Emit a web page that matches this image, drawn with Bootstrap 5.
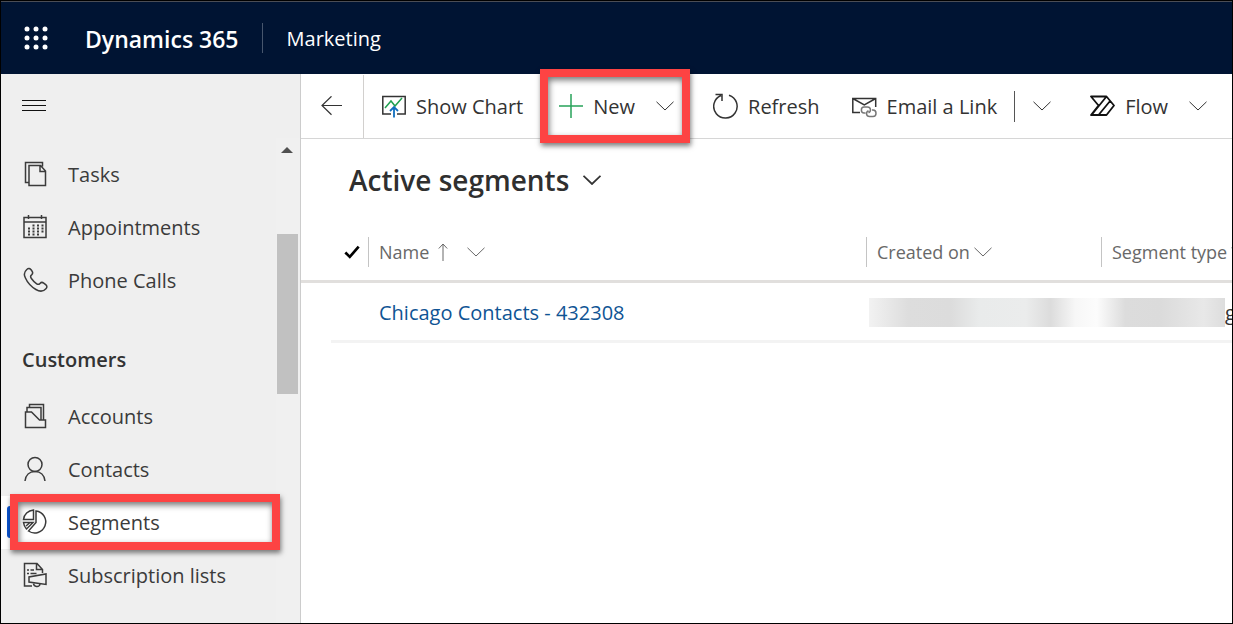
<!DOCTYPE html>
<html lang="en">
<head>
<meta charset="utf-8">
<meta name="viewport" content="width=device-width, initial-scale=1">
<title>Active segments - Dynamics 365 Marketing</title>
<link href="https://cdn.jsdelivr.net/npm/bootstrap@5.3.0/dist/css/bootstrap.min.css" rel="stylesheet">
<style>
  body { font-family: "Open Sans", "Noto Sans", sans-serif; font-size: 20px; line-height: 28px; color: #333; background: #fff; }
  svg { display: block; flex: none; fill: none; stroke: currentColor; stroke-width: 1.5; }
  svg.thin { stroke-width: 1; }
  svg.plus-icon { stroke: #27a35a; }
  svg.launcher-icon { fill: #fff; stroke: none; }
  svg.flow-icon { stroke: #111; stroke-width: 1.8; stroke-linejoin: round; }
  svg.check-icon { stroke: #000; stroke-width: 3; }
  svg.title-chevron { stroke-width: 1.8; }
  button { color: inherit; background: none; border: 0; padding: 0; }
  .app-frame { border: 1px solid #000; }
  .top-bar { height: 73px; background: #001433; border-top: 1px solid #4a4d55; padding: 0 20px 0 22px; color: #fff; }
  .brand-name { font-weight: 600; font-size: 23px; margin-left: 36px; padding-top: 2px; }
  .app-name { border-left: 1px solid #47566d; margin-left: 23px; padding-left: 24px; color: #fff; padding-top: 2px; }
  .side-nav { width: 300px; background: #efefef; border-right: 1px solid #ccc; }
  .menu-toggle { height: 64px; padding-left: 21px; color: #111; }
  .nav-items { padding-top: 10px; }
  .nav-row { height: 53px; padding: 0 0 1px 21px; color: #3b3b3b; text-decoration: none; position: relative; }
  .nav-row svg { margin-right: 20px; }
  .nav-row span { padding-top: 2px; }
  .nav-row.active { background: #fff; }
  .nav-row.active::before { content: ""; position: absolute; left: 6px; top: 10px; width: 8px; height: 32px; border-radius: 3px; background: #0b53ce; }
  .nav-heading { font-size: 20px; font-weight: 600; line-height: 28px; margin: 0; padding: 39px 0 16px 21px; }
  .scroll-track { width: 24px; background: #f0f0f0; padding: 9px 2px 0 0; }
  .scroll-arrow { border: 6px solid transparent; border-top: 0; border-bottom-color: #505050; }
  .scroll-thumb { width: 21px; height: 160px; background: #c1c1c1; margin-top: 81px; }
  .command-bar { height: 65px; border-bottom: 1px solid #d6d6d6; }
  .command-bar button { display: flex; align-items: center; gap: 10px; white-space: nowrap; }
  .command-bar button span { padding-top: 1px; }
  .back-button { width: 63px; height: 63px; border-right: 1px solid #d2d0ce !important; justify-content: center; margin-right: 18px; }
  .new-group { margin-left: 36px; }
  .gap-wide { margin-left: 39px; }
  .gap-mid { margin-left: 32px; }
  .gap-tight { margin-left: 21px; }
  .gap-title { margin-left: 14px; }
  .split-rule { width: 1px; height: 31px; background: #555; margin: 0 18px 0 17px; }
  .callout-box { position: absolute; border: 8px solid #fd4343; box-shadow: 1px 3px 5px rgba(0,0,0,.5), inset 1px 3px 6px rgba(0,0,0,.55); pointer-events: none; }
  .callout-new { inset: -23px -16px -22px -19px; }
  .callout-segments { inset: -2px -4px -1px 9px; z-index: 2; }
  .view-title { font-size: 28px; line-height: 36px; font-weight: 600; color: #2f2f2f; margin: 0; }
  .view-picker { padding: 23px 0 0 48px; }
  .segment-grid { table-layout: fixed; margin: 26px 0 0; width: 100%; border-collapse: separate; border-spacing: 0; }
  .segment-grid th, .segment-grid td { padding: 0; font-weight: 400; white-space: nowrap; overflow: hidden; }
  .segment-grid th { height: 59px; border-bottom: 3px solid #e1dfdd; color: #686868; font-size: 18px; vertical-align: middle; }
  .segment-grid td { height: 60px; border-bottom: 3px solid #f3f3f3; padding-top: 2px; }
  .segment-grid td.gutter { border-bottom: 0; }
  .head-cell { height: 30px; border-left: 1px solid #c4c4c4; padding-left: 10px; display: flex; align-items: center; }
  .sort-arrow { margin: 0 19px 0 9px; }
  .w-gutter { width: 30px; } .w-check { width: 37px; } .w-created { width: 235px; } .w-type { width: 131px; }
  .segment-link { color: #0f5494; text-decoration: none; padding-left: 11px; }
  .redacted { flex: 1; height: 29px; margin-left: 3px; background: linear-gradient(90deg, #f2f2f2 0, #ddd 11%, #dcdcdc 23%, #e9ebeb 31%, #ebecec 44%, #dcdcdc 51%, #f7f7f7 58%, #fcfcfc 64%, #dcdcdc 72%, #dbdbdb 82%, #e8e8e8 94%, #ddd 100%); }
  .cut-text { width: 7px; overflow: hidden; }
</style>
</head>
<body>
<svg class="d-none">
  <symbol id="chevron" viewBox="0 0 18 10"><path d="M.5.8 9 9 17.5.8"/></symbol>
</svg>
<div class="app-frame d-flex flex-column min-vh-100 overflow-hidden">
  <header class="top-bar d-flex align-items-center">
    <button type="button" aria-label="App launcher">
      <svg class="launcher-icon" width="26" height="26" viewBox="0 0 26 26"><circle cx="4" cy="4" r="2.5"/><circle cx="13" cy="4" r="2.5"/><circle cx="22" cy="4" r="2.5"/><circle cx="4" cy="13" r="2.5"/><circle cx="13" cy="13" r="2.5"/><circle cx="22" cy="13" r="2.5"/><circle cx="4" cy="22" r="2.5"/><circle cx="13" cy="22" r="2.5"/><circle cx="22" cy="22" r="2.5"/></svg>
    </button>
    <span class="brand-name">Dynamics 365</span>
    <span class="app-name">Marketing</span>
  </header>
  <div class="d-flex flex-grow-1">
    <aside class="side-nav flex-shrink-0 d-flex flex-column">
      <button type="button" class="menu-toggle d-flex align-items-center" aria-label="Toggle navigation"><svg class="thin" width="24" height="12" viewBox="0 0 24 12"><path d="M0 .5h24M0 5.500h24M0 10.500h24"/></svg></button>
      <div class="d-flex flex-grow-1">
        <nav class="nav-items flex-grow-1">
          <a href="#" class="nav-row d-flex align-items-center"><svg width="26" height="26" viewBox="0 0 26 26"><path d="M7 21.500H3.500V1.500h17v4M7 4.500h11.500l5 5.500v14.500H7zM18 4.500v6h5.500"/></svg><span>Tasks</span></a>
          <a href="#" class="nav-row d-flex align-items-center"><svg width="26" height="26" viewBox="0 0 26 26"><path d="M2 3.500h22v20H2zM2 8h22M6.500 1v4M19.500 1v4"/><path stroke-dasharray="2 2.500" stroke-width="1.800" d="M10.500 11.500h11M6 14.500h15.500M6 17.500h15.500M6 20.500h11"/></svg><span>Appointments</span></a>
          <a href="#" class="nav-row d-flex align-items-center"><svg width="26" height="26" viewBox="0 0 26 26"><path d="M5 2.200C6.500.8 8 1.500 9.300 3l1 1.600c.7 1.400.4 2.300-.7 3.200-1.300 1-1.400 2-.2 3.700 1.600 2.300 3.400 4.100 5.300 5.300 1.500 1 2.300.7 3.300-.4 1.200-1.300 2.400-1.300 3.700-.3l2 1.600c1.600 1.300 1.500 2.600.2 4-2.500 2.800-6 3.200-10 .8-4.700-2.900-8.700-7.500-10.600-11.800C1.500 7.300 2.300 4.600 5 2.200z"/></svg><span>Phone Calls</span></a>
          <h2 class="nav-heading">Customers</h2>
          <a href="#" class="nav-row d-flex align-items-center"><svg width="26" height="26" viewBox="0 0 26 26"><path d="M5 9V4.500h14v12M7.500 4.500v-3h14v15M3.500 9h6l8 8h6v7.500h-20z"/></svg><span>Accounts</span></a>
          <a href="#" class="nav-row d-flex align-items-center"><svg width="26" height="26" viewBox="0 0 26 26"><circle cx="13" cy="8.500" r="7"/><path d="M3 25c.6-6 4.500-9.500 10-9.500S22.400 19 23 25"/></svg><span>Contacts</span></a>
          <a href="#" class="nav-row active d-flex align-items-center" aria-current="page"><svg width="26" height="26" viewBox="0 0 26 26"><path d="M11.500 1v9.500H1.500C2 5.500 6 1.500 11.500 1zM14 2a11 11 0 1 1-7.500 20L14 13.500zM1.500 13.500H11L4.500 20C2.700 18 1.800 16 1.500 13.500zM4 17l4-3.500"/></svg><span>Segments</span><i class="callout-box callout-segments"></i></a>
          <a href="#" class="nav-row d-flex align-items-center"><svg width="26" height="26" viewBox="0 0 26 26"><path d="M10 24H2.500V1.500H15l5.500 6V11M14.500 1.500v6h6M5 8h2M8.500 8h3.500M5 11.500h2M8.500 11.500h6M7 15v5l17 2.500V12L7 15zM11.500 21c0 4.500 6 4.500 6.500 1"/></svg><span>Subscription lists</span></a>
        </nav>
        <div class="scroll-track d-flex flex-column align-items-center" aria-hidden="true"><span class="scroll-arrow"></span><span class="scroll-thumb"></span></div>
      </div>
    </aside>
    <main class="flex-fill w-100">
      <div class="command-bar d-flex align-items-center">
        <button type="button" class="back-button" aria-label="Back"><svg class="thin" width="22" height="20" viewBox="0 0 22 20"><path stroke-width="1.200" d="M1 9.500h20M10.500.3 1 9.500l9.500 9.200"/></svg></button>
        <button type="button"><svg width="24" height="24" viewBox="0 0 24 24"><path d="M9 20H.8V2.500h22.400V20H15"/><path stroke="#1fa050" d="m3 14 6-7 4 5 7-8"/><path stroke="#106ebe" stroke-width="1.800" d="M12 23.500v-10M8 17l4-4 4 4"/></svg><span>Show Chart</span></button>
        <div class="new-group position-relative d-flex align-items-center">
          <button type="button"><svg class="plus-icon" width="24" height="24" viewBox="0 0 24 24"><path d="M12 0v24M0 12h24"/></svg><span>New</span></button>
          <button type="button" class="gap-tight" aria-label="More new options"><svg class="thin" width="18" height="10"><use href="#chevron"/></svg></button>
          <i class="callout-box callout-new"></i>
        </div>
        <button type="button" class="gap-wide"><svg width="25" height="26" viewBox="0 0 25 26"><path d="M16 2.200A11.700 11.700 0 1 1 8 2.500M2.500 1.500H9V8"/></svg><span>Refresh</span></button>
        <button type="button" class="gap-mid"><svg width="25" height="24" viewBox="0 0 25 24"><path d="M8 18.500H.8V4.500h22.900V13M.8 4.500l11.500 6.500 11.400-6.500"/><path stroke="#777" d="M13.500 19H12c-3.500 0-3.500-6 0-6h3.500c3.500 0 4 4.500 1 5.800M20 16h1c4 0 4 6.500 0 6.500h-3.500c-3.500 0-4-4.500-1-5.800"/></svg><span>Email a Link</span></button>
        <span class="split-rule"></span>
        <button type="button" aria-label="More link options"><svg class="thin" width="18" height="10"><use href="#chevron"/></svg></button>
        <button type="button" class="gap-wide"><svg class="flow-icon" width="25" height="22" viewBox="0 0 25 22"><path d="M1 1.500h15.500l7.500 9-7.500 9.500H1l7.500-9.500zM16.500 1.500 1.500 20M20.500 5.500 8.500 20"/></svg><span>Flow</span></button>
        <button type="button" class="gap-tight" aria-label="Flow options"><svg class="thin" width="18" height="10"><use href="#chevron"/></svg></button>
      </div>
      <div class="view-picker d-flex align-items-center">
        <h1 class="view-title">Active segments</h1>
        <button type="button" class="gap-title" aria-label="Change view"><svg class="title-chevron" width="18" height="10"><use href="#chevron"/></svg></button>
      </div>
      <table class="segment-grid">
        <colgroup><col class="w-gutter"><col class="w-check"><col><col class="w-created"><col class="w-type"></colgroup>
        <thead>
          <tr>
            <th></th>
            <th scope="col" aria-label="Select"><svg class="check-icon ms-auto me-2" width="16" height="14" viewBox="0 0 18 15"><path d="m1.500 8 5 5L16.500 1.500"/></svg></th>
            <th scope="col"><div class="head-cell">Name<svg class="thin sort-arrow" width="10" height="18" viewBox="0 0 10 18"><path d="M5 18V1M.8 5.500 5 1l4.200 4.500"/></svg><svg class="thin" width="18" height="10"><use href="#chevron"/></svg></div></th>
            <th scope="col"><div class="head-cell">Created on<svg class="thin ms-1" width="18" height="10"><use href="#chevron"/></svg></div></th>
            <th scope="col"><div class="head-cell">Segment type<svg class="thin ms-1" width="18" height="10"><use href="#chevron"/></svg></div></th>
          </tr>
        </thead>
        <tbody>
          <tr>
            <td class="gutter"></td>
            <td></td>
            <td><a href="#" class="segment-link">Chicago Contacts - 432308</a></td>
            <td colspan="2"><div class="d-flex align-items-center"><span class="redacted"></span><span class="cut-text">g</span></div></td>
          </tr>
        </tbody>
      </table>
    </main>
  </div>
</div>
<script src="https://cdn.jsdelivr.net/npm/bootstrap@5.3.0/dist/js/bootstrap.bundle.min.js"></script>
</body>
</html>
